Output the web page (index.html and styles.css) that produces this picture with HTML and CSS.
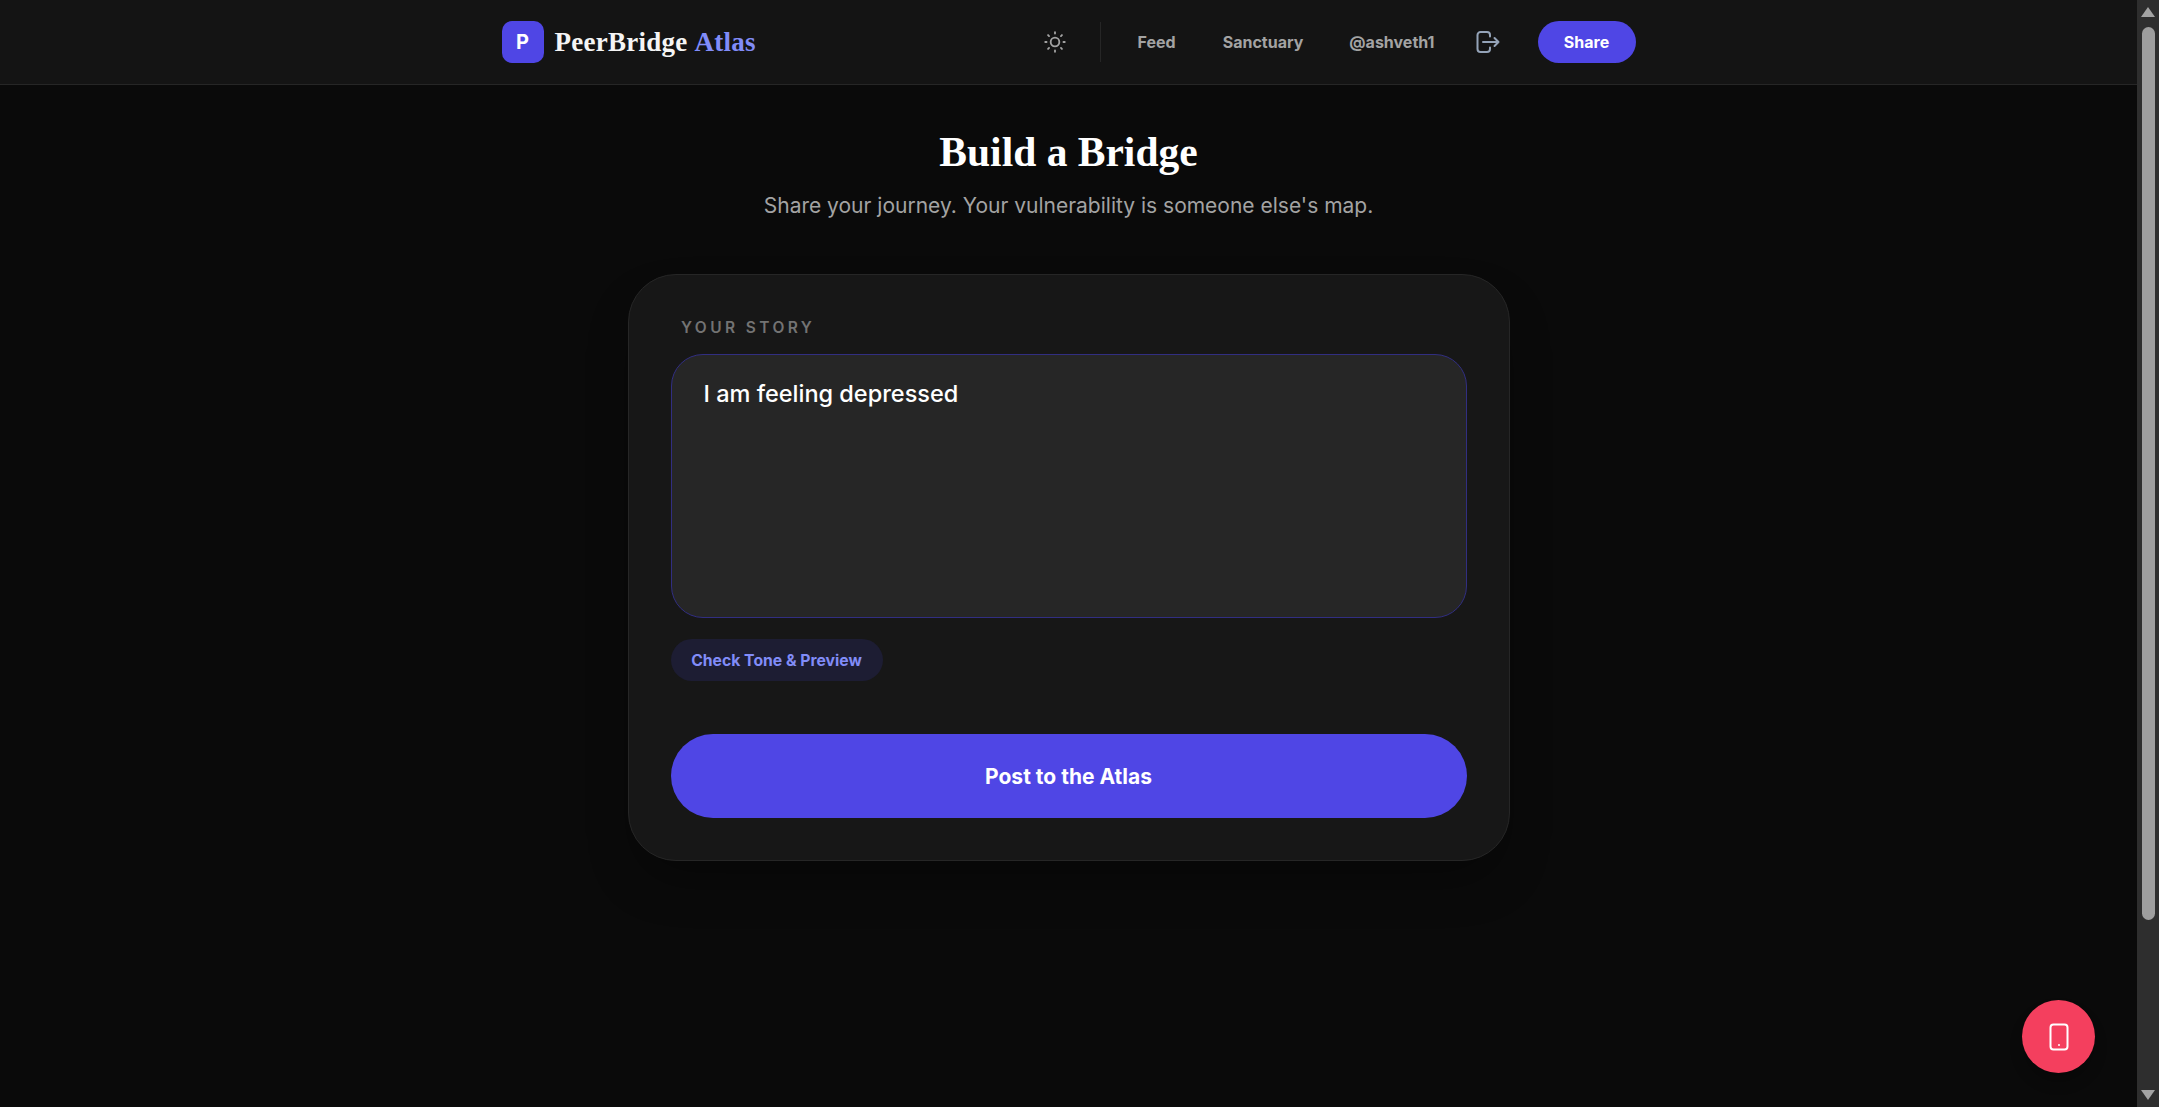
FILE: index.html
```html
<!DOCTYPE html>
<html lang="en">
<head>
<meta charset="utf-8">
<title>PeerBridge Atlas</title>
<link rel="stylesheet" href="styles.css">
</head>
<body>
<div class="page">
  <header class="nav">
    <div class="nav-inner">
      <a class="brand">
        <span class="brand-mark">P</span>
        <span class="brand-name">PeerBridge <span class="brand-accent">Atlas</span></span>
      </a>
      <nav class="nav-right">
        <button class="icon-btn theme" aria-label="Theme">
          <svg width="26" height="26" viewBox="0 0 24 24" fill="none" stroke="currentColor" stroke-width="1.700" stroke-linecap="round" stroke-linejoin="round"><circle cx="12" cy="12" r="4"/><path d="M12 3v1.200M12 19.800V21M3 12h1.200M19.800 12H21M5.600 5.600l.9.9M17.500 17.500l.9.9M5.600 18.400l.9-.9M17.500 6.500l.9-.9"/></svg>
        </button>
        <span class="divider"></span>
        <a class="nav-link feed">Feed</a>
        <a class="nav-link sanctuary">Sanctuary</a>
        <a class="nav-link user">@ashveth1</a>
        <button class="icon-btn logout" aria-label="Log out">
          <svg width="24" height="24" viewBox="0 0 24 24" fill="none" stroke="currentColor" stroke-width="2" stroke-linecap="round" stroke-linejoin="round"><path d="M14 6.500V5a3 3 0 0 0-3-3H4.500a3 3 0 0 0-3 3v14a3 3 0 0 0 3 3H11a3 3 0 0 0 3-3v-1.500"/><path d="M7 12h15.500M18.500 8l4 4-4 4"/></svg>
        </button>
        <a class="share-btn">Share</a>
      </nav>
    </div>
  </header>
  <main class="main">
    <h1 class="title">Build a Bridge</h1>
    <p class="subtitle">Share your journey. Your vulnerability is someone else's map.</p>
    <section class="card">
      <label class="label">YOUR STORY</label>
      <div class="story">I am feeling depressed</div>
      <button class="tone-btn">Check Tone &amp; Preview</button>
      <button class="post-btn">Post to the Atlas</button>
    </section>
  </main>
  <button class="fab" aria-label="Mobile">
    <svg width="26" height="32" viewBox="0 0 26 32" fill="none" stroke="currentColor" stroke-width="2" stroke-linecap="round" stroke-linejoin="round"><rect x="4.500" y="3.500" width="17" height="25" rx="3"/><path d="M13 24v.01"/></svg>
  </button>
</div>
<aside class="scrollbar" aria-hidden="true">
  <span class="arrow up"></span>
  <span class="thumb"></span>
  <span class="arrow down"></span>
</aside>
</body>
</html>
```
FILE: styles.css
```css
* { box-sizing: border-box; }
html, body { margin: 0; height: 100%; overflow: hidden; }
body { display: flex; background: #0a0a0a; font-family: "Inter", "Liberation Sans", sans-serif; color: #fff; }
button { font-family: inherit; border: 0; cursor: pointer; }
.page { flex: 1; position: relative; height: 1107px; min-width: 0; }

.nav { height: 85px; background: #141414; border-bottom: 1px solid #262626; }
.nav-inner { width: 1134px; height: 84px; margin: 0 auto; display: flex; align-items: center; justify-content: space-between; }
.brand { display: flex; align-items: center; gap: 11px; }
.brand-mark { width: 42px; height: 42px; border-radius: 10px; background: #4f46e5; display: flex; align-items: center; justify-content: center; font-weight: 700; font-size: 20px; }
.brand-name { font-family: "Liberation Serif", serif; font-weight: 700; font-size: 27px; letter-spacing: 0.25px; word-spacing: 1.5px; color: #f5f5f5; }
.brand-accent { color: #818cf8; }
.nav-right { display: flex; align-items: center; }
.icon-btn { background: none; padding: 0; display: flex; }
.theme { color: #a3a3a3; margin-right: 32px; }
.divider { width: 1px; height: 40px; background: #262626; margin-right: 37px; }
.nav-link { font-size: 16px; font-weight: 700; color: #a3a3a3; }
.feed { margin-right: 47px; }
.sanctuary { margin-right: 46px; }
.user { margin-right: 41px; }
.logout { color: #94a3b8; margin-right: 38px; }
.share-btn { width: 98px; height: 42px; border-radius: 21px; background: #4f46e5; display: flex; align-items: center; justify-content: center; font-size: 16px; font-weight: 700; }

.main { display: flex; flex-direction: column; align-items: center; padding-top: 41px; }
.title { margin: 0; font-family: "Liberation Serif", serif; font-weight: 700; font-size: 41.5px; line-height: 52px; color: #fff; }
.subtitle { margin: 14px 0 0; font-size: 21px; line-height: 28px; color: #a3a3a3; }
.card { width: 882px; height: 587px; margin-top: 54px; padding: 43px 42px 42px; background: #171717; border: 1px solid #262626; border-radius: 48px; box-shadow: 0 25px 50px -12px rgba(0,0,0,.4); display: flex; flex-direction: column; align-items: flex-start; }
.label { font-size: 15.5px; line-height: 20px; font-weight: 600; letter-spacing: 3.4px; color: #737373; margin-left: 10.5px; }
.story { width: 796px; height: 264px; margin-top: 16px; padding: 23px 32px; background: #262626; border: 1px solid #312e81; border-radius: 32px; font-size: 23.5px; line-height: 32px; font-weight: 500; color: #fff; }
.tone-btn { margin-top: 21px; width: 212px; height: 42px; border-radius: 21px; background: #1d1d33; color: #818cf8; font-size: 15.75px; font-weight: 700; padding: 0; }
.post-btn { margin-top: 53px; width: 796px; height: 84px; border-radius: 42px; background: #4f46e5; color: #fff; font-size: 21px; font-weight: 700; }

.fab { position: absolute; left: 2022px; top: 1000px; width: 73px; height: 73px; border-radius: 50%; background: #f43f5e; color: #fff; display: flex; align-items: center; justify-content: center; padding: 0; box-shadow: 0 10px 15px -3px rgba(0,0,0,.3); }

.scrollbar { width: 22px; height: 1107px; background: #2e2e2e; position: relative; display: flex; flex-direction: column; align-items: center; flex: none; }
.thumb { position: absolute; left: 5px; top: 27px; width: 13px; height: 893px; border-radius: 7px; background: #9e9e9e; }
.arrow { position: absolute; left: 4px; width: 0; height: 0; border-left: 7px solid transparent; border-right: 7px solid transparent; }
.arrow.up { top: 7px; border-bottom: 10px solid #a3a3a3; }
.arrow.down { bottom: 7px; border-top: 10px solid #a3a3a3; }
```
